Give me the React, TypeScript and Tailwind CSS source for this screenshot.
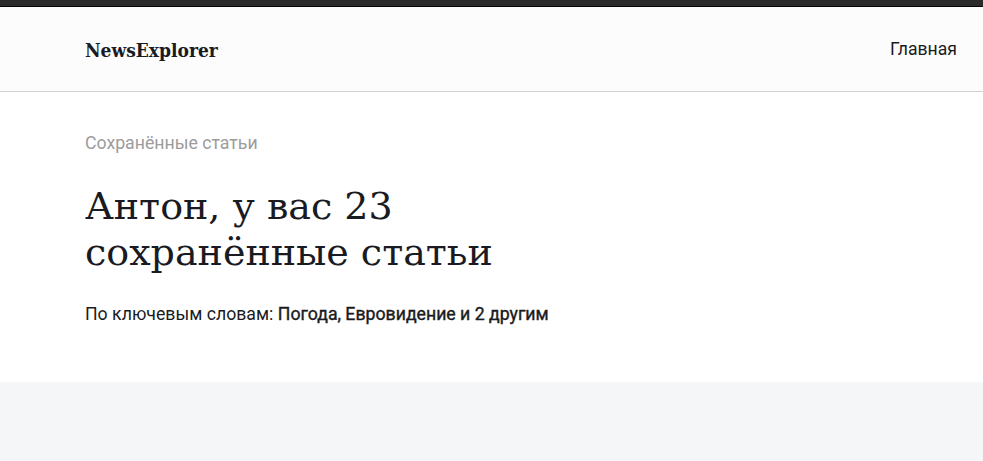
import React from "react";

// Saved articles page header: top nav + intro with keyword summary
const slab = "font-['Roboto_Slab','DejaVu_Serif',serif]";
const roboto = "font-['Roboto','Liberation_Sans',sans-serif]";

export default function App() {
	return (
		<div className={`min-h-[461px] bg-[#f5f6f7] ${roboto}`}>
			{/* Browser-like dark strip */}
			<div className="h-[6px] bg-[#2b2b2b]" />
			<div className="h-px bg-[#050505]" />

			{/* Header */}
			<header className="flex h-[85px] items-center justify-between border-b border-[#d1d1d1] bg-[#fcfcfc] pl-[85px] pr-[26px]">
				<span
					className={`pt-[2px] text-[19px] leading-6 font-bold text-[#1a1b22] font-['Roboto_Slab','DejaVu_Serif_Condensed','DejaVu_Serif',serif] [font-stretch:condensed]`}
				>
					NewsExplorer
				</span>
				<nav>
					<a className="text-[17.6px] leading-6 text-[#1a1b22]">Главная</a>
				</nav>
			</header>

			{/* Intro */}
			<section className="bg-white pl-[85px] pt-[39px] pb-[56px]">
				<p className="text-[17.7px] leading-6 text-[#9c9c9c]">Сохранённые статьи</p>
				<h1
					className={`mt-[28px] max-w-[440px] text-[38px] leading-[46px] font-normal text-[#1a1b22] ${slab}`}
				>
					Антон, у вас 23 сохранённые статьи
				</h1>
				<p className="mt-[27px] text-[17.7px] leading-6 text-[#1a1b22]">
					По ключевым словам:{" "}
					<span className="[-webkit-text-stroke:0.4px_#1a1b22]">
						Погода, Евровидение и 2 другим
					</span>
				</p>
			</section>
		</div>
	);
}
